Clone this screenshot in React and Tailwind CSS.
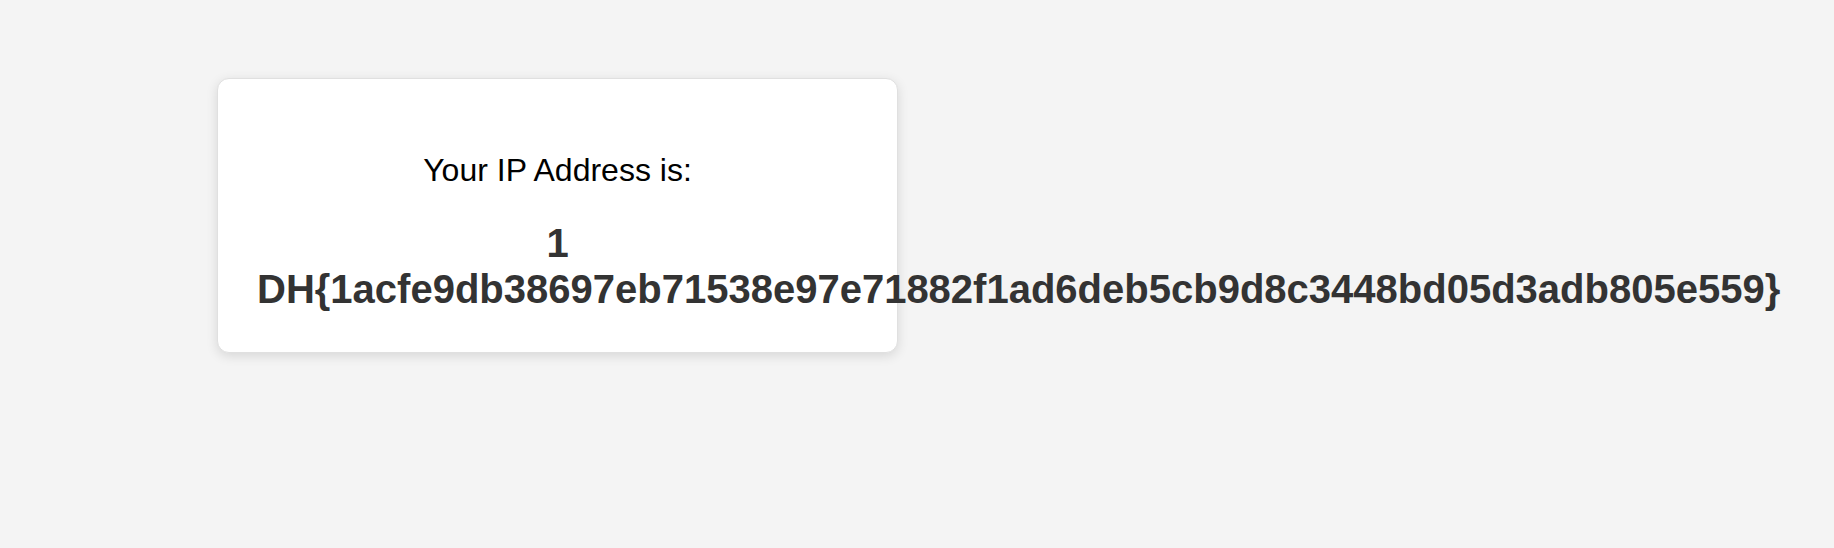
import React from "react";

const App = () => {
  const ip = "1 DH{1acfe9db38697eb71538e97e71882f1ad6deb5cb9d8c3448bd05d3adb805e559}";

  return (
    <div className="min-h-[548px] w-full bg-[#f4f4f4] pl-[217px] pt-[78px] font-['Liberation_Sans',Arial,sans-serif]">
      <div className="w-[681px] rounded-[12px] border border-[#e0e0e0] bg-white px-[39px] pt-[73px] pb-[40px] text-center shadow-[0_3px_12px_rgba(0,0,0,0.12)]">
        <p className="text-[32px] leading-[37px] text-black">Your IP Address is:</p>
        <p className="mt-[31px] text-[40px] leading-[46px] font-bold text-[#333]">{ip}</p>
      </div>
    </div>
  );
};

export default App;
